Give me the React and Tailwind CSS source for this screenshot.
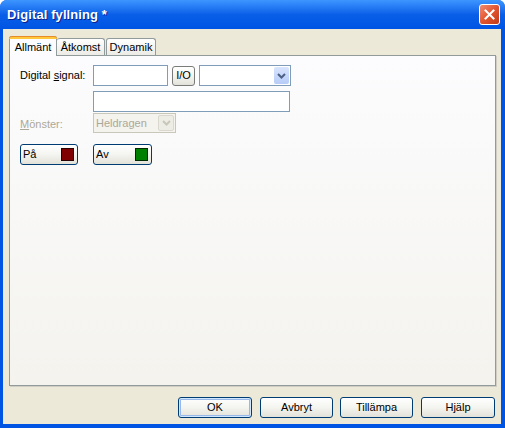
import React from "react";

const font = { fontFamily: '"Liberation Sans", Arial, sans-serif' };

function XpButton({ children, className = "", focused = false, between = false }) {
  return (
    <div
      className={`flex items-center ${between ? "justify-between" : "justify-center"} rounded-[3px] border border-[#003c74] bg-gradient-to-b from-[#ffffff] via-[#f4f4f0] to-[#e3e2d9] text-[11px] text-black ${
        focused ? "shadow-[inset_0_0_0_1px_#cee7ff,inset_0_0_0_2px_#98b8ea]" : ""
      } ${className}`}
    >
      {children}
    </div>
  );
}

function Chevron({ color = "#4d6185" }) {
  return (
    <svg width="9" height="6" viewBox="0 0 9 6">
      <path d="M1 1 L4.5 4.5 L8 1" fill="none" stroke={color} strokeWidth="2" />
    </svg>
  );
}

export default function App() {
  return (
    <div style={font} className="w-[505px] h-[428px] bg-[#0054e3] flex flex-col overflow-hidden rounded-t-[7px]">
      {/* Title bar */}
      <div className="h-[29px] shrink-0 flex items-center justify-between pl-[7px] pr-[5px] bg-gradient-to-b from-[#3d95ff] via-[#0a5fe8] to-[#0054e3]">
        <span
          className="text-white font-bold text-[13px] tracking-[0.1px]"
          style={{ textShadow: "1px 1px 0 #0f1e89" }}
        >
          Digital fyllning *
        </span>
        <div className="w-[21px] h-[21px] rounded-[3px] border border-white bg-gradient-to-br from-[#f08b6f] via-[#e2542f] to-[#c13a16] flex items-center justify-center">
          <svg width="11" height="11" viewBox="0 0 11 11">
            <path d="M1.5 1.5 L9.5 9.5 M9.5 1.5 L1.5 9.5" stroke="white" strokeWidth="2" strokeLinecap="square" />
          </svg>
        </div>
      </div>

      {/* Body */}
      <div className="flex-1 ml-[3px] mb-[4px] mr-[4px] bg-[#ece9d8] flex flex-col pl-[6px] pr-[5px] pt-[7px]">
        {/* Tabs */}
        <div className="flex items-end h-[19px] text-[11px] text-black">
          <div className="relative z-10 w-[48px] h-[20px] -mb-px bg-[#fcfcfe] border border-[#919b9c] border-b-0 rounded-t-[3px] flex items-center justify-center">
            <div className="absolute -top-px -left-px -right-px h-[3px] rounded-t-[3px] bg-[#ffc83c] border-t border-[#e68b2c]" />
            <span className="mt-[2px]">Allmänt</span>
          </div>
          <div className="w-[48px] h-[17px] bg-gradient-to-b from-white to-[#ecebe6] border border-[#919b9c] border-b-0 border-l-0 rounded-t-[3px] flex items-center justify-center">
            Åtkomst
          </div>
          <div className="ml-[1px] w-[50px] h-[17px] bg-gradient-to-b from-white to-[#ecebe6] border border-[#919b9c] border-b-0 rounded-t-[3px] flex items-center justify-center">
            Dynamik
          </div>
        </div>

        {/* Panel */}
        <div className="w-[487px] h-[331px] border border-[#919b9c] bg-gradient-to-b from-[#fcfcfe] to-[#f4f3ee] shadow-[1px_1px_0_#d0cec4] pl-[10px] pt-[9px] text-[11px] text-black">
          {/* Row 1 */}
          <div className="flex items-center h-[21px]">
            <span className="w-[73px]">
              Digital <span className="underline">s</span>ignal:
            </span>
            <div className="w-[75px] h-[21px] bg-white border border-[#7f9db9]" />
            <XpButton className="ml-[4px] w-[23px] h-[20px] rounded-[2px] border-[#7a7a7a] bg-gradient-to-b from-[#f6f4ec] to-[#d8d4c4]">
              I/O
            </XpButton>
            <div className="ml-[4px] w-[92px] h-[21px] bg-white border border-[#7f9db9] flex justify-end p-[1px]">
              <div className="w-[15px] h-full rounded-[2px] bg-gradient-to-b from-[#d9e5fd] to-[#b6cbf7] flex items-center justify-center">
                <Chevron />
              </div>
            </div>
          </div>
          {/* Row 2 */}
          <div className="flex mt-[5px]">
            <div className="ml-[73px] w-[197px] h-[21px] bg-white border border-[#7f9db9]" />
          </div>
          {/* Row 3 */}
          <div className="flex items-center mt-[1px] h-[20px]">
            <span className="w-[73px] text-[#aca899] mt-[2px]">
              <span className="underline">M</span>önster:
            </span>
            <div className="w-[83px] h-[20px] bg-[#f4f3ee] border border-[#c9c7ba] flex items-center justify-between pl-[2px] pr-[1px]">
              <span className="text-[#aca899]">Heldragen</span>
              <div className="w-[16px] h-[16px] bg-[#eeede5] border border-[#dad8ce] rounded-[2px] flex items-center justify-center">
                <Chevron color="#c9c7ba" />
              </div>
            </div>
          </div>
          {/* Row 4 */}
          <div className="flex items-center mt-[11px]">
            <XpButton between className="w-[58px] h-[21px] pl-[2px] pr-[3px]">
              <span>På</span>
              <span className="w-[13px] h-[13px] bg-[#800000] border border-[#2a0000]" />
            </XpButton>
            <XpButton between className="ml-[15px] w-[59px] h-[21px] pl-[2px] pr-[3px]">
              <span>Av</span>
              <span className="w-[13px] h-[13px] bg-[#008000] border border-[#002a00]" />
            </XpButton>
          </div>
        </div>

        {/* Bottom buttons */}
        <div className="flex justify-end mt-[11px] pr-[1px]">
          <XpButton focused className="w-[74px] h-[21px]">OK</XpButton>
          <XpButton className="ml-[8px] w-[73px] h-[21px]">Avbryt</XpButton>
          <XpButton className="ml-[7px] w-[73px] h-[21px]">Tillämpa</XpButton>
          <XpButton className="ml-[8px] w-[74px] h-[21px]">Hjälp</XpButton>
        </div>
      </div>
    </div>
  );
}
